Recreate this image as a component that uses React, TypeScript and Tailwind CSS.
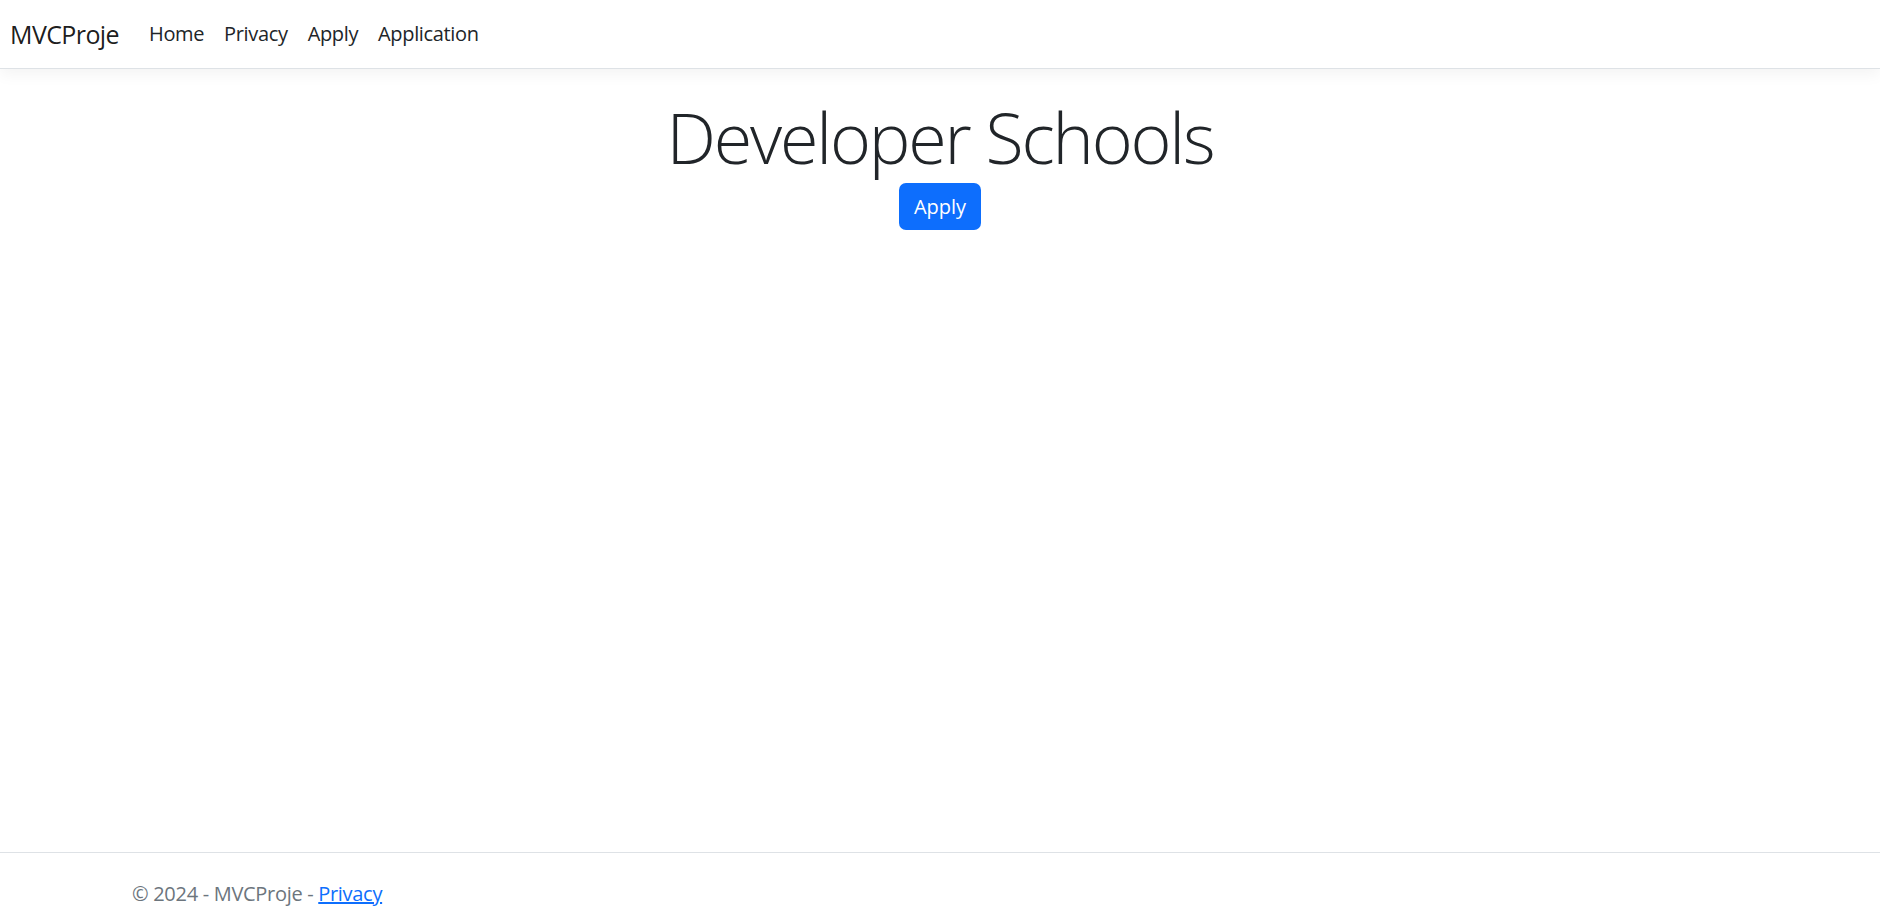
export default function App() {
  const font = { fontFamily: "'Open Sans', 'Noto Sans', sans-serif" };
  return (
    <div className="min-h-screen flex flex-col bg-white text-[#212529]" style={font}>
      <nav className="h-[69px] flex items-center border-b border-[#dee2e6] shadow-[0_5px_15px_rgba(0,0,0,0.05)] bg-white px-[10px]">
        <a className="text-[25px] text-black/90 mr-[20px] leading-[38px] tracking-[-0.6px]">MVCProje</a>
        <ul className="flex items-center">
          {['Home', 'Privacy', 'Apply', 'Application'].map((l) => (
            <li key={l}>
              <a className="block px-[10px] text-[20px] leading-[38px] tracking-[-0.35px] text-[#212529]">{l}</a>
            </li>
          ))}
        </ul>
      </nav>

      <main className="flex-1 pt-[26px]">
        <div className="flex flex-col items-center text-center">
          <h1 className="text-[70px] font-light leading-[84px] tracking-[-2.2px]">Developer Schools</h1>
          <button className="mt-[4px] h-[47px] px-[15px] rounded-[7px] bg-[#0d6efd] text-white text-[20px]">
            Apply
          </button>
        </div>
      </main>

      <footer className="h-[66px] border-t border-[#dee2e6] text-[20px] text-[#6c757d]">
        <div className="max-w-[1650px] mx-auto px-[17px] pt-[26px] tracking-[-0.3px]">
          © 2024 - MVCProje - <a className="text-[#0d6efd] underline">Privacy</a>
        </div>
      </footer>
    </div>
  );
}
